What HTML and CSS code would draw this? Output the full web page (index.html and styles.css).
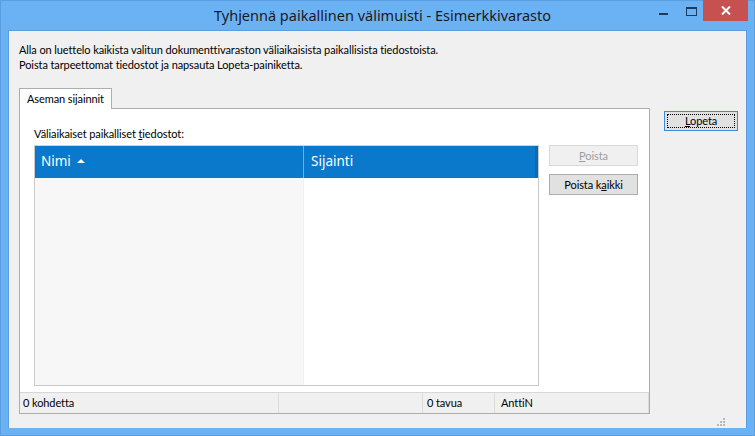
FILE: index.html
```html
<!DOCTYPE html>
<html>
<head>
<meta charset="utf-8">
<link rel="stylesheet" href="styles.css">
</head>
<body>
<div class="window">
  <div class="titlebar">
    <div class="title">Tyhjennä paikallinen välimuisti - Esimerkkivarasto</div>
    <div class="controls">
      <div class="ctl min"><svg width="10" height="3" viewBox="0 0 10 3"><rect x="0" y="0" width="9" height="2" fill="#1e3a5c"/></svg></div>
      <div class="ctl max"><svg width="12" height="10" viewBox="0 0 12 10"><rect x="0.5" y="0.5" width="10" height="8" fill="none" stroke="#1e3a5c" stroke-width="1"/><rect x="0" y="0" width="11" height="2" fill="#1e3a5c"/></svg></div>
      <div class="ctl close"><svg width="10" height="9" viewBox="0 0 10 9"><path d="M1 0.5 L9 8.5 M9 0.5 L1 8.5" stroke="#fff" stroke-width="2"/></svg></div>
    </div>
  </div>
  <div class="client">
    <div class="intro">
      <div>Alla on luettelo kaikista valitun dokumenttivaraston väliaikaisista paikallisista tiedostoista.</div>
      <div>Poista tarpeettomat tiedostot ja napsauta Lopeta-painiketta.</div>
    </div>
    <div class="main">
      <div class="tabs">
        <div class="tabstrip"><div class="tab">Aseman sijainnit</div></div>
        <div class="panel">
          <div class="panel-body">
            <div class="label">Väliaikaiset paikalliset <u>t</u>iedostot:</div>
            <div class="list-row">
              <div class="list">
                <div class="list-head">
                  <div class="col c1">Nimi <span class="arrow"></span></div>
                  <div class="col c2">Sijainti</div>
                </div>
                <div class="list-body">
                  <div class="colbody b1"></div>
                  <div class="colbody b2"></div>
                </div>
              </div>
              <div class="side">
                <div class="btn disabled"><u>P</u>oista</div>
                <div class="btn">Poista k<u>a</u>ikki</div>
              </div>
            </div>
          </div>
          <div class="status">
            <div class="sec s1">0 kohdetta</div>
            <div class="sec s2"></div>
            <div class="sec s3">0 tavua</div>
            <div class="sec s4">AnttiN</div>
          </div>
        </div>
      </div>
      <div class="right">
        <div class="btn default"><span class="focus"><u>L</u>opeta</span></div>
      </div>
    </div>
    <div class="grip">
      <svg width="8" height="8" viewBox="0 0 8 8" fill="#b8b8b8">
        <rect x="6" y="0" width="2" height="2"/>
        <rect x="3" y="3" width="2" height="2"/><rect x="6" y="3" width="2" height="2"/>
        <rect x="0" y="6" width="2" height="2"/><rect x="3" y="6" width="2" height="2"/><rect x="6" y="6" width="2" height="2"/>
      </svg>
    </div>
  </div>
</div>
</body>
</html>
```

FILE: styles.css
```css
html, body {
  margin: 0;
  padding: 0;
}
body {
  width: 755px;
  height: 436px;
  overflow: hidden;
  font-family: "Lato", "Noto Sans", sans-serif;
  font-size: 11px;
  letter-spacing: -0.1px;
  color: #000;
}
.window {
  width: 755px;
  height: 436px;
  background: #6ab2f4;
  box-sizing: border-box;
  border: 1px solid #5a9ee0;
  display: flex;
  flex-direction: column;
}
.titlebar {
  height: 29px;
  display: flex;
  position: relative;
}
.title {
  flex: 1;
  text-align: center;
  font-family: "Noto Sans", sans-serif;
  font-size: 14.5px;
  letter-spacing: 0;
  line-height: 29px;
  color: #1a1a1a;
  padding-left: 10px;
}
.controls {
  position: absolute;
  right: 6px;
  top: -1px;
  display: flex;
  align-items: flex-start;
}
.ctl {
  display: flex;
  justify-content: center;
}
.ctl.min {
  width: 26px;
  height: 20px;
  align-items: flex-start;
}
.ctl.min svg { margin-top: 13px; }
.ctl.max {
  width: 26px;
  height: 20px;
  align-items: flex-start;
  padding-left: 4px;
  box-sizing: border-box;
}
.ctl.max svg { margin-top: 7px; }
.ctl.close {
  width: 45px;
  height: 21px;
  background: #c75050;
  align-items: center;
}
.client {
  margin: 0 7px;
  height: 398px;
  background: #f0f0f0;
  border: 1px solid #5a9ee0;
  border-bottom: none;
  box-sizing: border-box;
  display: flex;
  flex-direction: column;
  position: relative;
}
.intro {
  padding: 11px 0 0 10px;
  line-height: 15px;
  white-space: nowrap;
}
.main {
  display: flex;
  margin-top: 16px;
  padding-left: 10px;
}
.tabs {
  width: 631px;
  display: flex;
  flex-direction: column;
}
.tabstrip {
  display: flex;
  height: 20px;
}
.tab {
  width: 93px;
  height: 21px;
  box-sizing: border-box;
  border: 1px solid #adadad;
  border-bottom: none;
  background: #fff;
  padding-left: 7px;
  line-height: 19px;
  white-space: nowrap;
  position: relative;
  z-index: 1;
}
.panel {
  height: 306px;
  box-sizing: border-box;
  border: 1px solid #adadad;
  background: #fff;
  display: flex;
  flex-direction: column;
}
.panel-body {
  flex: 1;
  padding: 17px 0 0 14px;
}
.label {
  line-height: 15px;
  height: 19px;
  white-space: nowrap;
}
.list-row {
  display: flex;
  gap: 10px;
}
.list {
  width: 505px;
  height: 241px;
  box-sizing: border-box;
  border: 1px solid #c9c9c9;
  border-top-color: #c0d8ec;
  display: flex;
  flex-direction: column;
}
.list-head {
  height: 32px;
  background: #0a79cb;
  display: flex;
  color: #fff;
  font-family: "Noto Sans", sans-serif;
  font-size: 13.5px;
  letter-spacing: 0;
  line-height: 31px;
}
.col.c1 {
  width: 269px;
  padding-left: 6px;
  box-sizing: border-box;
  border-right: 1px solid #6fb0e4;
}
.col.c2 {
  flex: 1;
  padding-left: 7px;
  border-right: 3px solid #0a6ab5;
}
.arrow {
  display: inline-block;
  width: 0;
  height: 0;
  border-left: 4px solid transparent;
  border-right: 4px solid transparent;
  border-bottom: 4px solid #fff;
  margin-left: 3px;
  vertical-align: 3px;
}
.list-body {
  flex: 1;
  display: flex;
}
.colbody.b1 {
  width: 269px;
  background: #f7f7f7;
  border-right: 1px solid #f0f0f0;
  box-sizing: border-box;
}
.colbody.b2 {
  flex: 1;
  background: #fff;
}
.side {
  display: flex;
  flex-direction: column;
  gap: 8px;
}
.btn {
  width: 89px;
  height: 21px;
  box-sizing: border-box;
  border: 1px solid #adadad;
  background: #e1e1e1;
  text-align: center;
  line-height: 19px;
  white-space: nowrap;
}
.btn.disabled {
  border-color: #d9d9d9;
  background: #f0f0f0;
  color: #9d9d9d;
}
.status {
  height: 21px;
  box-sizing: border-box;
  border-top: 1px solid #d7d7d7;
  background: #f0f0f0;
  display: flex;
  line-height: 20px;
}
.sec {
  box-sizing: border-box;
  padding-left: 3px;
  border-right: 1px solid #dcdcdc;
}
.sec.s1 { width: 259px; }
.sec.s2 { width: 144px; }
.sec.s3 { width: 72px; padding-left: 4px; }
.sec.s4 { flex: 1; padding-left: 6px; }
.right {
  padding-left: 14px;
  padding-top: 23px;
}
.btn.default {
  width: 74px;
  height: 20px;
  border-color: #3c8ad8;
  padding: 2px;
  line-height: 14px;
}
.focus {
  display: block;
  height: 14px;
  border: 1px dotted #000;
  box-sizing: border-box;
  line-height: 12px;
}
.grip {
  position: absolute;
  right: 21px;
  bottom: 2px;
  line-height: 0;
}
```
